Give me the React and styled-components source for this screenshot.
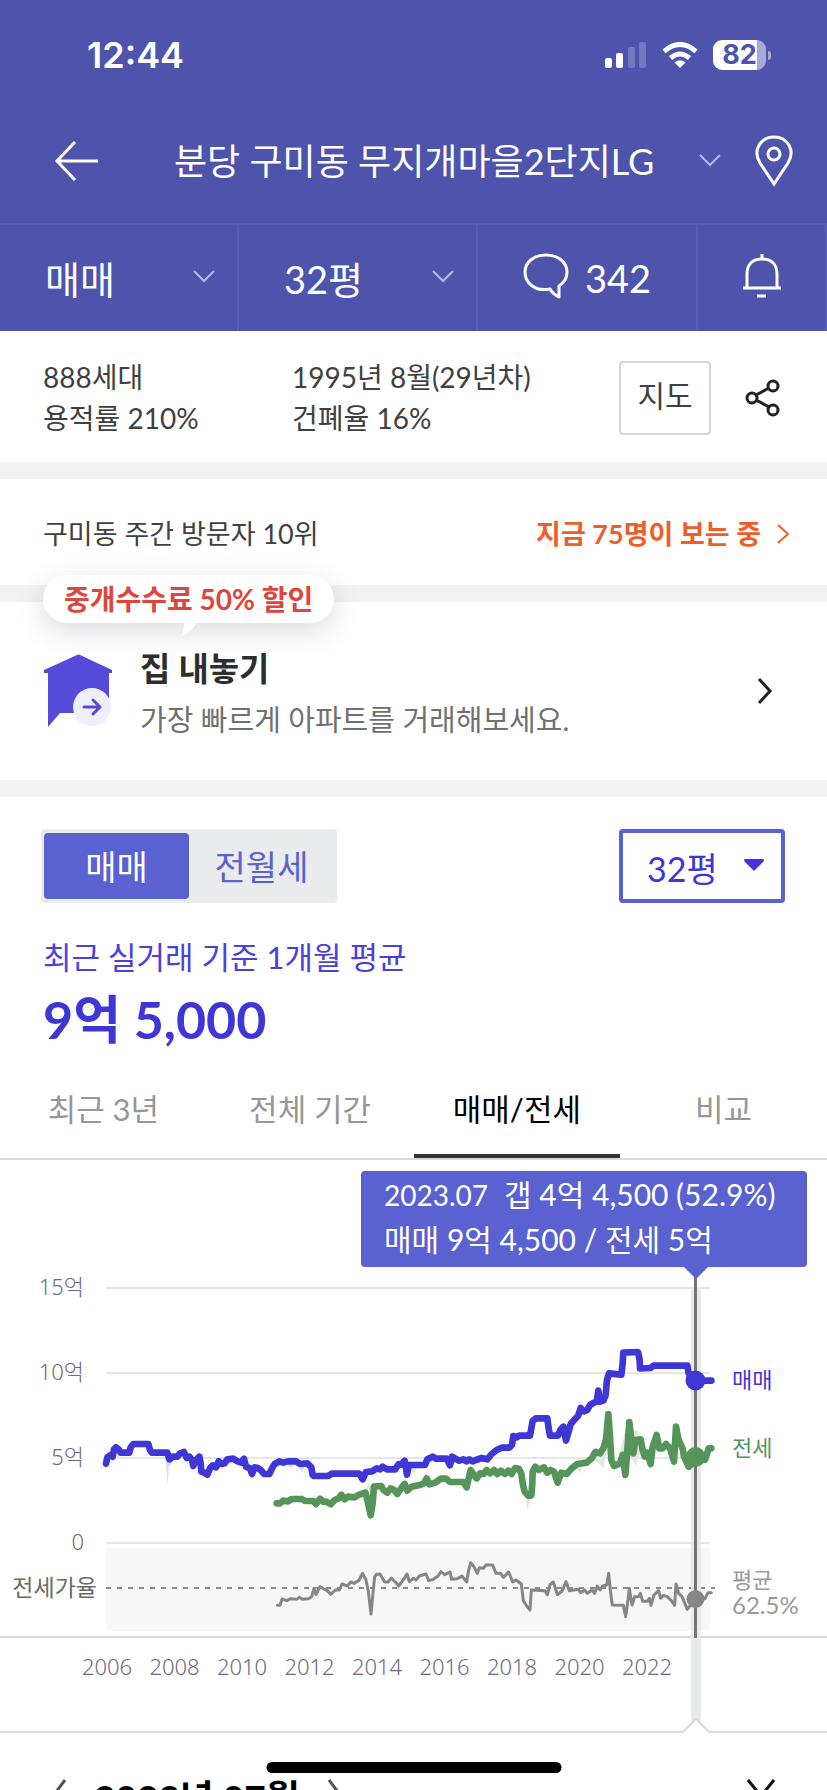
import React, { useState } from 'react'
import styled, { createGlobalStyle } from 'styled-components'

const GlobalStyle = createGlobalStyle`
    * {
        box-sizing: border-box;
    }

    body {
        margin: 0;
        background: #fff;
        color: #404040;
        font-family: Lato, "Noto Sans CJK KR", sans-serif;
    }

    button, select {
        margin: 0;
        padding: 0;
        border: 0;
        background: none;
        color: inherit;
        font: inherit;
        cursor: pointer;
    }

    a {
        color: inherit;
        text-decoration: none;
    }

    svg {
        display: block;
        flex: none;
    }
`

const Page = styled.div`
    height: 100vh;
    overflow: hidden;
`

/* header */

const Header = styled.header`
    background: #4e54ac;
    color: #fff;
`

const StatusBar = styled.div`
    display: flex;
    align-items: center;
    height: 100px;
    padding: 10px 56px 0 87px;
    font-family: Inter, sans-serif;
`

const Clock = styled.time`
    flex: 1;
    font-size: 36px;
    font-weight: 600;
`

const StatusIcons = styled.div`
    display: flex;
    align-items: center;
    gap: 15px;
`

const Battery = styled.div`
    display: flex;
    align-items: center;
    gap: 2px;

    &::after {
        content: "";
        width: 3px;
        height: 9px;
        border-radius: 0 4px 4px 0;
        background: #a6a9d5;
    }
`

const BatteryLevel = styled.div`
    width: 53px;
    border-radius: 9px;
    background: linear-gradient(to right, #fff 83%, #a6a9d5 83%);
    color: #4e54ac;
    font-size: 27px;
    font-weight: 700;
    line-height: 30px;
    text-align: center;
`

const TitleBar = styled.div`
    display: flex;
    align-items: center;
    height: 121px;
    padding: 0 34px 0 54px;
    margin-bottom: 2px;
    gap: 34px;
`

const BackButton = styled.button`
    margin-right: 42px;
`

const TitleButton = styled.button`
    display: flex;
    flex: 1;
    align-items: center;
    justify-content: space-between;
`

const Title = styled.h1`
    margin: 0;
    font-size: 36px;
    font-weight: 400;
    line-height: 48px;
`

const FilterBar = styled.div`
    display: grid;
    grid-template-columns: 239fr 239fr 220fr 129fr;
    height: 108px;
    border-top: 2px solid #585eb3;
`

const filterCell = `
    border-right: 2px solid #585eb3;
    font-size: 38px;
    line-height: 48px;
`

const FilterSelect = styled.label`
    ${filterCell}
    display: grid;
    align-items: center;

    & > * {
        grid-area: 1 / 1;
    }

    & > select {
        height: 100%;
        padding: 2px 0 0 45px;
        appearance: none;
    }

    & > svg {
        justify-self: end;
        margin: 0 22px 4px 0;
        pointer-events: none;
    }
`

const FilterButton = styled.button`
    ${filterCell}
    display: flex;
    align-items: center;
    justify-content: center;
    gap: 16px;

    & > svg {
        margin-bottom: 4px;
    }
`

/* summary rows */

const Summary = styled.section`
    display: grid;
    grid-template-columns: 249px 1fr auto auto;
    align-items: center;
    height: 131px;
    padding: 2px 46px 0 43px;
    font-size: 28px;
    line-height: 41px;
`

const MapButton = styled.button`
    width: 92px;
    height: 74px;
    margin-right: 34px;
    padding-bottom: 5px;
    border: 2px solid #d6d6d6;
    border-radius: 4px;
    font-size: 30px;
`

const Divider = styled.div`
    height: 17px;
    background: #f2f2f2;
`

const Visitors = styled.section`
    display: flex;
    align-items: center;
    justify-content: space-between;
    height: 106px;
    padding: 3px 37px 0 43px;
    font-size: 27px;
    line-height: 40px;
`

const WatchingLink = styled.a`
    display: flex;
    align-items: center;
    gap: 16px;
    color: #ee5e2c;
    font-weight: 700;
`

const Promo = styled.section`
    position: relative;
`

const PromoLink = styled.a`
    display: flex;
    align-items: center;
    height: 178px;
    padding: 0 54px 0 43px;
`

const PromoText = styled.div`
    flex: 1;
    padding: 5px 0 0 27px;
`

const PromoTitle = styled.h2`
    margin: 0;
    color: #2e2e2e;
    font-size: 33px;
    font-weight: 700;
    line-height: 52px;
`

const PromoDesc = styled.p`
    margin: 0;
    color: #707070;
    font-size: 29px;
    line-height: 52px;
`

const Bubble = styled.div`
    position: absolute;
    top: -27px;
    left: 43px;
    padding: 0 21px;
    border-radius: 24px;
    background: #fff;
    box-shadow: 0 8px 28px rgba(40, 50, 60, 0.17);
    color: #dd463c;
    font-size: 28px;
    font-weight: 700;
    line-height: 48px;

    & > svg {
        position: absolute;
        top: 100%;
        left: 138px;
    }
`

/* price */

const PriceHead = styled.section`
    padding: 32px 42px 12px 41px;
`

const PriceControls = styled.div`
    display: flex;
    justify-content: space-between;
`

const Segment = styled.div`
    display: flex;
    height: 74px;
    padding: 4px 3px;
    border-radius: 4px;
    background: #e9ebec;
`

const SegmentButton = styled.button`
    width: 145px;
    padding-bottom: 2px;
    border-radius: 4px;
    background: ${({ $active }) => ($active ? '#5a61d1' : 'transparent')};
    color: ${({ $active }) => ($active ? '#fff' : '#5a61d1')};
    font-size: 34px;
`

const SizeSelect = styled.label`
    display: grid;
    align-items: center;
    width: 166px;
    border: 4px solid #5a61d1;
    border-radius: 4px;
    color: #4036d8;
    font-size: 34px;

    & > * {
        grid-area: 1 / 1;
    }

    & > select {
        height: 100%;
        padding: 4px 0 0 24px;
        appearance: none;
    }

    & > svg {
        justify-self: end;
        margin: 0 17px 2px 0;
        pointer-events: none;
    }
`

const PriceBasis = styled.p`
    margin: 34px 0 0 2px;
    color: #4a40da;
    font-size: 31px;
    line-height: 40px;
`

const Price = styled.p`
    margin: 12px 0 1px 2px;
    color: #3f36d6;
    font-size: 52px;
    font-weight: 700;
    line-height: 60px;
`

const Tabs = styled.nav`
    display: grid;
    grid-template-columns: repeat(4, 1fr);
    border-bottom: 2px solid #d9d9d9;
`

const Tab = styled.button`
    height: 96px;
    padding-bottom: 2px;
    border-bottom: 4px solid ${({ $active }) => ($active ? '#333' : 'transparent')};
    color: ${({ $active }) => ($active ? '#000' : '#969696')};
    font-size: 31px;
`

/* chart */

const ChartBox = styled.section`
    position: relative;
`

const ChartSvg = styled.svg`
    width: 100%;
    height: auto;
    font-size: 22px;

    .axis {
        fill: #6d6a80;
        font-family: "Noto Sans", "Noto Sans CJK KR", sans-serif;
        font-weight: 300;
    }
`

const Tooltip = styled.div`
    position: absolute;
    top: 11px;
    right: 20px;
    width: 446px;
    padding: 1px 24px 6px 23px;
    border-radius: 4px;
    background: #5a61d1;
    color: #fff;
    font-size: 30px;
    line-height: 44px;
    white-space: nowrap;

    & > span {
        margin-right: 16px;
        font-size: 28px;
    }

    &::after {
        content: "";
        position: absolute;
        top: 100%;
        right: 99px;
        border: 12px solid transparent;
        border-top-color: #5a61d1;
        border-bottom: 0;
    }
`

/* month sheet */

const MonthBar = styled.section`
    display: flex;
    align-items: center;
    gap: 28px;
    height: 124px;
    padding: 0 52px;
`

const Month = styled.h3`
    margin: 0;
    color: #000;
    font-size: 37px;
    font-weight: 700;
`

const CloseButton = styled.button`
    margin-left: auto;
`

const HomeIndicator = styled.div`
    position: fixed;
    bottom: 17px;
    left: 50%;
    width: 295px;
    height: 11px;
    border-radius: 6px;
    background: #000;
    transform: translateX(-50%);
`

function Chevron({ d = 'M1 1L11 11L21 1', width = 22, height = 13, color = '#b9bce2', stroke = 2 }) {
    return (
        <svg width={width} height={height} fill="none" stroke={color} strokeWidth={stroke}>
            <path d={d} />
        </svg>
    )
}

function SignalIcon() {
    return (
        <svg width="42" height="26" fill="#fff">
            <rect y="16" width="7" height="10" rx="2" />
            <rect x="11" y="11" width="7" height="15" rx="2" />
            <rect x="23" y="5" width="7" height="21" rx="2" opacity=".22" />
            <rect x="34" width="7" height="26" rx="2" opacity=".22" />
        </svg>
    )
}

function WifiIcon() {
    return (
        <svg width="36" height="26" viewBox="0 0 36 26" fill="none" stroke="#fff" strokeWidth="5">
            <path d="M2 9.300Q18 -4.300 34 9.300" />
            <path d="M8.500 16Q18 8 27.500 16" />
            <path d="M18 26L12.500 20.500Q18 16 23.500 20.500Z" fill="#fff" stroke="none" />
        </svg>
    )
}

function BackIcon() {
    return (
        <svg width="44" height="40" fill="none" stroke="#fff" strokeWidth="3">
            <path d="M21 1L3 20L21 39M3 20H44" />
        </svg>
    )
}

function PinIcon() {
    return (
        <svg width="38" height="52" fill="none" stroke="#fff" strokeWidth="3">
            <path d="M19 49L5 28C-3 15 6 2 19 2S41 15 33 28Z" />
            <circle cx="19" cy="19" r="6" />
        </svg>
    )
}

function CommentIcon() {
    return (
        <svg width="46" height="46" fill="none" stroke="#fff" strokeWidth="3" strokeLinejoin="round">
            <path d="M27 36C12 39 2 30 2 19C2 9 11 2 23 2S44 9 44 19C44 25 41 30 36 33V44C32 42 29 40 27 36Z" />
        </svg>
    )
}

function BellIcon() {
    return (
        <svg width="40" height="44" fill="none" stroke="#fff" strokeWidth="3">
            <path d="M1 34H39M5 34V20C5 10 11 5 20 5S35 10 35 20V34M20 0V5" />
            <path d="M15 42H24" />
        </svg>
    )
}

function ShareIcon() {
    return (
        <svg width="36" height="38" fill="none" stroke="#222" strokeWidth="3">
            <path d="M11 16L24 9M11 21L24 28" />
            <circle cx="7" cy="19" r="5" />
            <circle cx="28" cy="7" r="5" />
            <circle cx="28" cy="31" r="5" />
        </svg>
    )
}

function HouseIcon() {
    return (
        <svg width="70" height="74" viewBox="0 0 70 74">
            <path d="M37 1Q36 0 34 1L1 16V19H5V73L17 59H66V19H69V16Z" fill="#544bdb" />
            <circle cx="49" cy="53" r="19" fill="#efeffc" />
            <path d="M41 53H57M50 46L57 53L50 60" fill="none" stroke="#544bdb" strokeWidth="3" strokeLinecap="round" strokeLinejoin="round" />
        </svg>
    )
}

// traces are drawn on a grid three times finer than the chart
const saleTrace = '318,941 322,922 330,916 338,920 342,898 348,892 356,898 362,908 388,908 392,892 400,882 445,882 450,900 456,908 502,908 508,928 518,920 532,920 540,910 552,906 560,924 568,920 576,930 580,948 588,930 598,920 602,940 604,965 612,968 622,974 630,955 638,946 648,952 656,934 664,942 674,940 682,928 700,926 712,934 724,938 732,926 738,950 750,955 756,972 764,952 774,954 784,962 792,972 808,972 816,955 824,942 838,934 850,938 864,934 888,934 900,942 922,940 934,952 938,975 942,978 985,978 995,971 1078,971 1088,988 1098,966 1116,964 1130,955 1140,958 1148,950 1160,958 1186,958 1196,942 1204,944 1214,932 1218,955 1221,974 1227,945 1275,945 1282,928 1298,920 1308,926 1340,926 1350,946 1356,920 1366,926 1378,932 1390,928 1400,934 1408,928 1418,934 1428,930 1445,924 1462,928 1475,912 1490,900 1505,893 1528,893 1536,885 1540,858 1550,862 1558,857 1590,857 1594,835 1598,812 1608,805 1642,805 1646,835 1650,857 1674,857 1682,838 1690,830 1698,872 1706,845 1712,822 1724,808 1734,798 1742,774 1752,784 1762,780 1770,765 1782,758 1790,755 1795,722 1800,755 1810,752 1817,735 1821,690 1827,670 1864,674 1868,640 1870,608 1914,606 1919,630 1920,655 1952,654 1960,647 2062,647 2066,670 2086,692 2134,692'

const leaseTrace = '830,1060 840,1060 850,1052 864,1054 876,1047 905,1047 915,1053 940,1053 948,1062 960,1046 970,1055 980,1055 992,1063 1004,1050 1016,1045 1024,1034 1034,1048 1044,1040 1064,1042 1078,1034 1096,1028 1102,1050 1112,1096 1118,1060 1122,1010 1144,1008 1150,1020 1162,1028 1172,1015 1182,1020 1192,1032 1204,1014 1214,1002 1222,1022 1235,1010 1260,1005 1272,1000 1280,985 1288,1003 1305,998 1322,986 1338,986 1350,996 1390,996 1400,1012 1406,985 1412,960 1422,975 1430,985 1440,970 1450,972 1460,960 1470,970 1482,960 1492,972 1503,962 1515,972 1525,962 1535,972 1545,954 1556,956 1564,970 1568,1000 1574,1025 1586,1038 1594,1036 1597,1000 1598,965 1606,950 1616,960 1632,952 1642,968 1652,960 1662,965 1673,998 1684,968 1700,972 1715,955 1732,942 1760,938 1775,925 1786,906 1800,910 1810,895 1818,870 1825,792 1830,860 1834,930 1842,948 1860,940 1868,915 1876,975 1882,900 1888,816 1894,870 1900,910 1906,870 1922,868 1928,900 1934,920 1942,908 1952,942 1958,890 1970,855 1978,895 1988,895 1998,882 2010,895 2022,935 2028,830 2036,870 2048,895 2052,920 2066,950 2090,930 2115,930 2126,895 2134,895'

const ratioTrace = '52,226 60,226 66,207 80,212 92,206 110,208 118,202 128,208 145,206 155,200 162,175 168,194 180,170 192,177 202,182 212,193 226,180 238,180 246,162 262,168 272,156 282,160 296,152 308,130 318,150 325,185 333,252 340,180 344,140 350,133 360,132 374,156 384,156 394,144 406,156 416,168 428,152 441,132 448,155 460,145 468,150 478,138 498,132 506,152 520,148 534,138 543,125 554,134 570,126 575,148 592,146 606,138 620,156 626,120 632,98 642,110 652,130 658,113 670,115 678,105 698,105 708,130 722,130 730,142 746,126 758,156 768,150 784,162 790,212 800,228 810,240 814,180 855,182 862,194 870,164 880,156 892,194 906,184 918,155 928,182 955,178 962,188 974,180 982,190 996,180 1004,190 1012,168 1020,180 1028,168 1040,165 1046,130 1052,190 1057,225 1090,226 1097,260 1104,210 1108,175 1116,225 1124,200 1136,200 1141,190 1148,214 1162,214 1168,205 1173,226 1182,195 1196,182 1202,205 1210,196 1222,200 1234,212 1244,226 1248,162 1256,190 1266,200 1282,238 1292,225 1306,208 1335,206 1344,188 1354,188'

const gridLines = [
    { y: 128, label: '15억' },
    { y: 213, label: '10억' },
    { y: 298, label: '5억' },
    { y: 383, label: '0' },
]

const years = [2006, 2008, 2010, 2012, 2014, 2016, 2018, 2020, 2022]

function PriceChart() {
    return (
        <ChartBox>
            <ChartSvg viewBox="0 0 827 574" role="img" aria-label="매매/전세">
                <rect x="106" y="388" width="604" height="83" fill="#f7f7f7" />
                <g className="axis">
                    {gridLines.map(({ y, label }) => (
                        <g key={label}>
                            <path d={`M106 ${y}H710`} stroke="#e6e6e6" strokeWidth="2" />
                            <text x="84" y={y + 7} textAnchor="end">{label}</text>
                        </g>
                    ))}
                    {years.map((year, i) => (
                        <text key={year} x={107 + i * 67.5} y="515" textAnchor="middle">{year}</text>
                    ))}
                </g>

                <path d="M106 428H715" stroke="#8c8c8c" strokeWidth="2" strokeDasharray="5 6" />
                <path d="M0 477H827" stroke="#dadada" strokeWidth="2" />
                <path d="M691 127H701V562H691Z" fill="#e7e9e9" fillOpacity=".9" />
                <path d="M0 572H683L696 559L709 572H827" fill="#fff" stroke="#dadada" strokeWidth="2" />

                <g transform="translate(0 -10) scale(0.333333)" fill="none" strokeWidth="20" strokeLinecap="round" strokeLinejoin="round">
                    <path d="M496 915L502 1003L508 950L530 920ZM860 940L872 955L884 940ZM892 940L906 970L918 942ZM1232 945L1243 972L1254 945Z" fill="#dfddf7" />
                    <path d="M900 1045L907 1026L916 1050ZM1094 1024L1106 1002L1122 1008L1112 1060ZM1574 1035L1583 1083L1590 1040ZM1726 945L1738 972L1750 945ZM1776 925L1812 955L1820 880ZM1850 940L1876 840L1912 842L1926 890L1908 948L1890 920Z" fill="#e6e6e6" />
                    <polyline points={leaseTrace} stroke="#559559" />
                    <polyline points={saleTrace} stroke="#3f36d6" />
                </g>
                <polyline points={ratioTrace} transform="translate(260 370) scale(0.333333)" fill="none" stroke="#868686" strokeWidth="9" strokeLinecap="round" strokeLinejoin="round" />

                <path d="M695.5 117V478" stroke="#747474" strokeWidth="3" />
                <circle cx="695.5" cy="220.5" r="10" fill="#3f36d6" />
                <circle cx="695.5" cy="297" r="10" fill="#559559" />
                <circle cx="695.5" cy="439" r="9" fill="#868686" />

                <text x="732" y="228" fill="#3f36d6">매매</text>
                <text x="732" y="296" fill="#559559">전세</text>
                <text x="732" y="428" fill="#999">평균</text>
                <text x="732" y="454" fill="#999" fontSize="24">62.5%</text>
                <text x="97" y="436" fill="#6a6a6a" textAnchor="end" fontSize="23">전세가율</text>
            </ChartSvg>
            <Tooltip>
                <span>2023.07</span>갭 4억 4,500 (52.9%)<br />
                매매 9억 4,500 / 전세 5억
            </Tooltip>
        </ChartBox>
    )
}

const tabs = ['최근 3년', '전체 기간', '매매/전세', '비교']

function App() {
    const [deal, setDeal] = useState('매매')
    const [tab, setTab] = useState('매매/전세')

    return (
        <Page>
            <GlobalStyle />
            <Header>
                <StatusBar>
                    <Clock>12:44</Clock>
                    <StatusIcons>
                        <SignalIcon />
                        <WifiIcon />
                        <Battery>
                            <BatteryLevel>82</BatteryLevel>
                        </Battery>
                    </StatusIcons>
                </StatusBar>
                <TitleBar>
                    <BackButton aria-label="뒤로"><BackIcon /></BackButton>
                    <TitleButton>
                        <Title>분당 구미동 무지개마을2단지LG</Title>
                        <Chevron />
                    </TitleButton>
                    <button aria-label="위치"><PinIcon /></button>
                </TitleBar>
                <FilterBar>
                    <FilterSelect>
                        <select aria-label="거래 유형">
                            <option>매매</option>
                        </select>
                        <Chevron />
                    </FilterSelect>
                    <FilterSelect>
                        <select aria-label="평형">
                            <option>32평</option>
                        </select>
                        <Chevron />
                    </FilterSelect>
                    <FilterButton><CommentIcon />342</FilterButton>
                    <FilterButton aria-label="알림"><BellIcon /></FilterButton>
                </FilterBar>
            </Header>

            <Summary>
                <div>888세대<br />용적률 210%</div>
                <div>1995년 8월(29년차)<br />건폐율 16%</div>
                <MapButton>지도</MapButton>
                <button aria-label="공유"><ShareIcon /></button>
            </Summary>
            <Divider />
            <Visitors>
                <span>구미동 주간 방문자 10위</span>
                <WatchingLink href="#watching">
                    지금 75명이 보는 중
                    <Chevron d="M1 1L11 10L1 19" width={13} height={20} color="#ee5e2c" />
                </WatchingLink>
            </Visitors>
            <Divider />
            <Promo>
                <PromoLink href="#sell">
                    <HouseIcon />
                    <PromoText>
                        <PromoTitle>집 내놓기</PromoTitle>
                        <PromoDesc>가장 빠르게 아파트를 거래해보세요.</PromoDesc>
                    </PromoText>
                    <Chevron d="M2 1L13 13L2 25" width={16} height={26} color="#222" stroke={3} />
                </PromoLink>
                <Bubble>
                    중개수수료 50% 할인
                    <svg width="15" height="14" fill="#fff">
                        <path d="M3 0Q3 8 0 13Q12 9 15 0Z" />
                    </svg>
                </Bubble>
            </Promo>
            <Divider />

            <PriceHead>
                <PriceControls>
                    <Segment>
                        {['매매', '전월세'].map((name) => (
                            <SegmentButton key={name} $active={name === deal} onClick={() => setDeal(name)}>
                                {name}
                            </SegmentButton>
                        ))}
                    </Segment>
                    <SizeSelect>
                        <select aria-label="면적">
                            <option>32평</option>
                        </select>
                        <svg width="20" height="12" fill="#4036d8">
                            <path d="M1 0H19Q21 1 19 3L11 11Q10 12 9 11L1 3Q-1 1 1 0Z" />
                        </svg>
                    </SizeSelect>
                </PriceControls>
                <PriceBasis>최근 실거래 기준 1개월 평균</PriceBasis>
                <Price>9억 5,000</Price>
            </PriceHead>

            <Tabs>
                {tabs.map((name) => (
                    <Tab key={name} $active={name === tab} onClick={() => setTab(name)}>{name}</Tab>
                ))}
            </Tabs>
            <PriceChart />

            <MonthBar>
                <button aria-label="이전 달">
                    <Chevron d="M13 1L1 17L13 33" width={14} height={34} color="#555" stroke={3} />
                </button>
                <Month>2023년 07월</Month>
                <button aria-label="다음 달">
                    <Chevron d="M1 1L13 17L1 33" width={14} height={34} color="#555" stroke={3} />
                </button>
                <CloseButton aria-label="닫기">
                    <Chevron d="M1 1L27 33M27 1L1 33" width={28} height={34} color="#111" stroke={3} />
                </CloseButton>
            </MonthBar>
            <HomeIndicator />
        </Page>
    )
}

export default App
